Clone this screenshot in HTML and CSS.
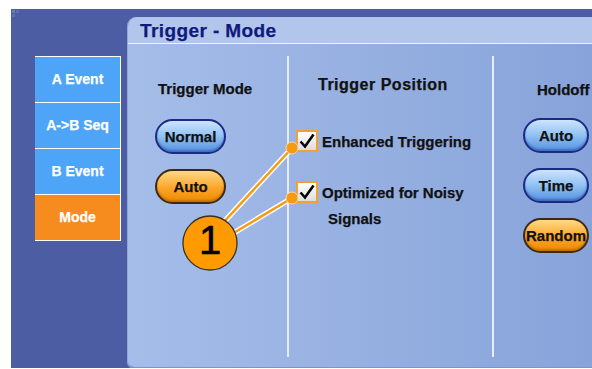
FILE: index.html
```html
<!DOCTYPE html>
<html lang="en">
<head>
    <meta charset="UTF-8">
    <title>Trigger - Mode</title>
    <link rel="stylesheet" href="styles.css">
</head>
<body>
    <div class="screen">
        <svg class="grip" width="8" height="8" viewBox="0 0 8 8">
            <rect x="0" y="0" width="3" height="3" fill="#6c7ab3"/>
            <rect x="4" y="0" width="3" height="3" fill="#5f6fae"/>
            <rect x="0" y="4" width="3" height="3" fill="#5f6fae"/>
        </svg>

        <div class="tabs">
            <div class="tab">A Event</div>
            <div class="tab">A-&gt;B Seq</div>
            <div class="tab">B Event</div>
            <div class="tab active">Mode</div>
        </div>

        <div class="panel">
            <div class="panel-title">Trigger - Mode</div>
            <div class="panel-body">
                <div class="col col-mode">
                    <h2>Trigger Mode</h2>
                    <button class="pill">Normal</button>
                    <button class="pill on">Auto</button>
                </div>
                <div class="col col-position">
                    <h2>Trigger Position</h2>
                    <div class="check-row">
                        <span class="box"><svg width="18" height="18" viewBox="0 0 18 18"><polyline points="2.5,9.5 7,14.5 15.5,2.5" fill="none" stroke="#000" stroke-width="2.6"/></svg></span>
                        <span class="check-label">Enhanced Triggering</span>
                    </div>
                    <div class="check-row">
                        <span class="box"><svg width="18" height="18" viewBox="0 0 18 18"><polyline points="2.5,9.5 7,14.5 15.5,2.5" fill="none" stroke="#000" stroke-width="2.6"/></svg></span>
                        <span class="check-label">Optimized for Noisy<br><span class="wrap">Signals</span></span>
                    </div>
                </div>
                <div class="col col-holdoff">
                    <h2>Holdoff</h2>
                    <button class="pill">Auto</button>
                    <button class="pill">Time</button>
                    <button class="pill on">Random</button>
                </div>
            </div>
        </div>

        <!-- callout 1 -->
        <svg class="callout" width="581" height="359" viewBox="11 9 581 359">
            <line x1="222" y1="224" x2="292" y2="148" stroke="#fff" stroke-width="5.5"/>
            <line x1="232" y1="234" x2="292" y2="198" stroke="#fff" stroke-width="5.5"/>
            <line x1="222" y1="224" x2="292" y2="148" stroke="#f59a12" stroke-width="2.5"/>
            <line x1="232" y1="234" x2="292" y2="198" stroke="#f59a12" stroke-width="2.5"/>
            <circle cx="292" cy="148" r="6" fill="#f59a12" stroke="#fbd9a0" stroke-width="1"/>
            <circle cx="292" cy="198" r="6" fill="#f59a12" stroke="#fbd9a0" stroke-width="1"/>
            <circle cx="210" cy="243" r="27" fill="#ff9a00" stroke="#3a3020" stroke-width="1.3"/>
            <text x="210" y="254" text-anchor="middle" class="callout-num">1</text>
        </svg>
    </div>
</body>
</html>
```

FILE: styles.css
```css
/* Reset */
body, h2, button {
    margin: 0;
    padding: 0;
}

body {
    background: #fff;
    font-family: 'Liberation Sans', Arial, sans-serif;
    font-weight: bold;
    -webkit-text-stroke: 0.25px;
}

/* Dark screen background */
.screen {
    position: relative;
    margin: 9px 0 0 11px;
    width: 581px;
    height: 359px;
    background: #4c5da4;
    display: flex;
    align-items: flex-start;
    overflow: hidden;
}

.grip {
    position: absolute;
    left: 1px;
    top: 1px;
}

/* Left side tabs */
.tabs {
    margin: 47px 0 0 24px;
    width: 86px;
    flex-shrink: 0;
    display: flex;
    flex-direction: column;
    border-top: 1px solid #fff;
}

.tab {
    height: 46px;
    box-sizing: border-box;
    background: #4ea5f8;
    color: #fff;
    font-size: 14px;
    display: flex;
    align-items: center;
    justify-content: center;
    border-bottom: 1px solid #fff;
    border-right: 1px solid #fff;
    padding-bottom: 2px;
}

.tab.active {
    background: #f68b1e;
}

/* Main panel */
.panel {
    margin: 8px 0 0 6px;
    flex: 1;
    height: 350px;
    border-radius: 9px 0 0 7px;
    overflow: hidden;
    border-left: 1px solid #8ea6da;
    border-bottom: 2px solid #7b93cf;
    display: flex;
    flex-direction: column;
}

.panel-title {
    height: 26px;
    background: #b2c5eb;
    border-bottom: 1px solid #eef2fb;
    color: #101a7e;
    font-size: 19px;
    letter-spacing: 0.4px;
    padding-left: 12px;
    line-height: 28px;
}

.panel-body {
    flex: 1;
    display: flex;
    background: linear-gradient(to right, #a5bde9, #87a3d9);
    padding: 12px 0 10px;
}

.col {
    display: flex;
    flex-direction: column;
    align-items: flex-start;
    border-right: 2px solid #e6edfa;
}

.col h2 {
    font-size: 15px;
    color: #111;
    line-height: 18px;
    white-space: nowrap;
}

/* Trigger Mode column */
.col-mode {
    width: 161px;
    padding-left: 27px;
    box-sizing: border-box;
}

.col-mode h2 {
    margin: 24px 0 21px 3px;
}

.col-mode .pill {
    margin-bottom: 15px;
}

/* Trigger Position column */
.col-position {
    width: 205px;
    padding-left: 7px;
    box-sizing: border-box;
}

.col-position h2 {
    font-size: 16px;
    letter-spacing: 0.5px;
    margin: 20px 0 0 22px;
}

.check-row {
    display: flex;
    align-items: flex-start;
    margin-top: 36px;
}

.check-row + .check-row {
    margin-top: 26px;
}

.box {
    width: 22px;
    height: 22px;
    box-sizing: border-box;
    border: 2px solid #f2a02e;
    background: linear-gradient(#fff, #dcdcdc);
    display: flex;
    align-items: center;
    justify-content: center;
}

.check-label {
    margin-left: 4px;
    font-size: 15px;
    line-height: 26px;
    margin-top: -1px;
    color: #111;
    white-space: nowrap;
}

.check-label .wrap {
    padding-left: 6px;
}

/* Holdoff column */
.col-holdoff {
    border-right: none;
    padding-left: 29px;
}

.col-holdoff h2 {
    margin: 25px 0 19px 14px;
}

.col-holdoff .pill {
    width: 66px;
    margin-bottom: 15px;
}

/* Pill buttons */
.pill {
    width: 71px;
    height: 35px;
    border-radius: 18px;
    border: 2px solid #1b2a85;
    background: linear-gradient(#cde4fc, #8fc1f3 50%, #5591e0);
    box-shadow: inset 0 -2px 2px rgba(20, 40, 120, 0.35);
    font-family: 'Liberation Sans', Arial, sans-serif;
    font-weight: bold;
    font-size: 15px;
    -webkit-text-stroke: 0.25px;
    color: #111;
    padding: 0;
    overflow: visible;
    white-space: nowrap;
}

.pill.on {
    border-color: #3d2a10;
    background: linear-gradient(#ffd985, #fba52a 55%, #ee8a00);
    box-shadow: inset 0 -2px 2px rgba(120, 60, 0, 0.35);
}

/* Callout overlay */
.callout {
    position: absolute;
    left: 0;
    top: 0;
    pointer-events: none;
}

.callout-num {
    font-family: 'Liberation Sans', Arial, sans-serif;
    font-weight: normal;
    font-size: 40px;
    fill: #000;
    stroke: #000;
    stroke-width: 0.6px;
}
```
